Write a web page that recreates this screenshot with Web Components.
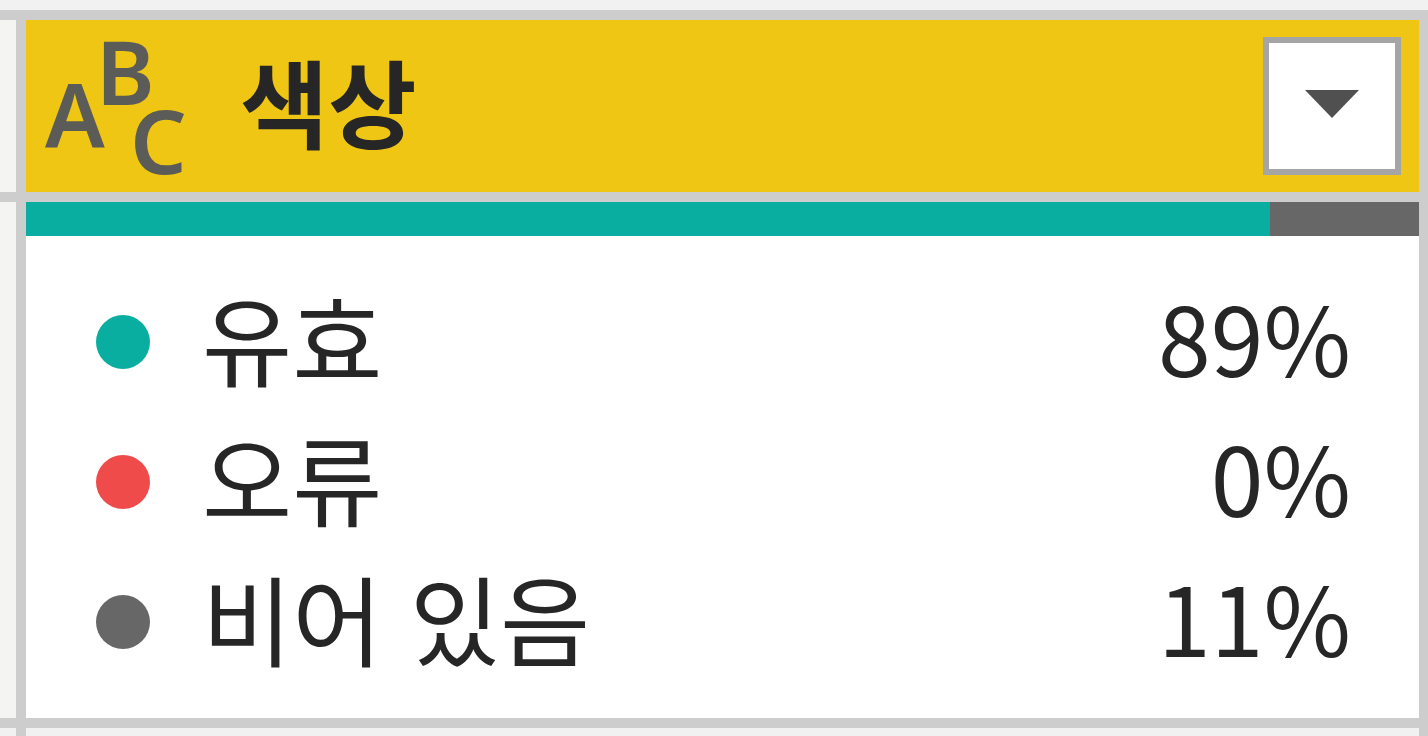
<!DOCTYPE html>
<html lang="ko">
<head>
<meta charset="utf-8">
<meta name="viewport" content="width=device-width, initial-scale=1">
<title>색상</title>
<style>
  body { margin: 0; background: #f1f1f1; color: #262626; font-family: "Noto Sans CJK KR", sans-serif; }
</style>
</head>
<body>
<profile-grid>
  <column-header slot="header">색상</column-header>
  <column-quality slot="quality" valid="89.3" error="0" empty="10.7"></column-quality>
</profile-grid>

<template id="profile-grid">
  <style>
    :host { display: grid; box-sizing: border-box; min-height: 100vh; background: #cdcdcd;
      grid-template-columns: 16px minmax(0, 1fr); grid-template-rows: 10px auto auto minmax(8px, 1fr);
      column-gap: 10px; row-gap: 10px; padding-right: 9px; }
    .edge { background: #f1f1f1; }
    .top { grid-column: 1 / -1; margin-right: -9px; }
    .row { background: #f4f4f3; }
  </style>
  <div class="edge top"></div>
  <div class="row"></div>
  <slot name="header"></slot>
  <div class="row"></div>
  <slot name="quality"></slot>
  <div class="edge"></div>
  <div class="edge"></div>
</template>

<template id="column-header">
  <style>
    :host { display: flex; align-items: center; box-sizing: border-box; height: 172px; padding: 0 18px; background: #efc613; }
    h1 { flex: 1; margin: 0; padding: 0 0 12px 54px; font-size: 96px; line-height: 160px; font-weight: 700; }
  </style>
  <type-icon></type-icon>
  <h1><slot></slot></h1>
  <menu-button></menu-button>
</template>

<template id="type-icon">
  <style>
    :host { display: block; flex: none; width: 142px; height: 172px; }
    svg { display: block; overflow: visible; }
    text { font: 600 89px "Noto Sans", sans-serif; fill: #5b5b57; }
  </style>
  <svg width="142" height="172" viewBox="0 0 142 172" role="img" aria-label="ABC">
    <text x="1" y="128">A</text>
    <text x="52" y="85">B</text>
    <text x="86" y="154">C</text>
  </svg>
</template>

<template id="menu-button">
  <style>
    :host { display: block; flex: none; }
    button { display: flex; align-items: center; justify-content: center; box-sizing: border-box; width: 138px; height: 138px;
      margin: 0; padding: 0 0 4px; border: 6px solid #a5a5a5; border-radius: 0; background: #fff; }
    svg { display: block; }
  </style>
  <button type="button" aria-label="메뉴">
    <svg width="54" height="28" viewBox="0 0 54 28"><path d="M0 0H54L27 28Z" fill="#505050"/></svg>
  </button>
</template>

<template id="column-quality">
  <style>
    :host { display: block; background: #fff; padding-bottom: 26px; }
    .bar { display: flex; height: 34px; }
    .valid { --tone: #0aaea0; }
    .error { --tone: #ef4b4b; }
    .empty { --tone: #676767; }
    .bar span { background: var(--tone); }
    table { width: 100%; margin-top: 36px; border-collapse: collapse; font-size: 98px; line-height: 128px; }
    th, td { padding: 0; font-weight: 400; }
    th { text-align: left; padding-left: 70px; }
    td { text-align: right; padding: 0 68px 12px 0; font-size: 95px; }
    .label { display: flex; align-items: center; gap: 52px; }
    .name { padding-bottom: 12px; }
    .dot { flex: none; width: 54px; height: 54px; border-radius: 50%; background: var(--tone); }
  </style>
  <div class="bar"><span class="valid"></span><span class="error"></span><span class="empty"></span></div>
  <table>
    <tr class="valid"><th scope="row"><div class="label"><span class="dot"></span><span class="name">유효</span></div></th><td></td></tr>
    <tr class="error"><th scope="row"><div class="label"><span class="dot"></span><span class="name">오류</span></div></th><td></td></tr>
    <tr class="empty"><th scope="row"><div class="label"><span class="dot"></span><span class="name">비어 있음</span></div></th><td></td></tr>
  </table>
</template>

<script>
  class TemplateElement extends HTMLElement {
    constructor() {
      super();
      this.attachShadow({ mode: "open" })
        .append(document.getElementById(this.localName).content.cloneNode(true));
    }
  }
  customElements.define("type-icon", class extends TemplateElement {});
  customElements.define("menu-button", class extends TemplateElement {});
  customElements.define("column-header", class extends TemplateElement {});
  customElements.define("column-quality", class extends TemplateElement {
    connectedCallback() {
      for (const kind of ["valid", "error", "empty"]) {
        const value = Number(this.getAttribute(kind));
        this.shadowRoot.querySelector("tr." + kind + " td").textContent = Math.round(value) + "%";
        this.shadowRoot.querySelector(".bar ." + kind).style.flex = value + " 1 0";
      }
    }
  });
  customElements.define("profile-grid", class extends TemplateElement {});
</script>
</body>
</html>
